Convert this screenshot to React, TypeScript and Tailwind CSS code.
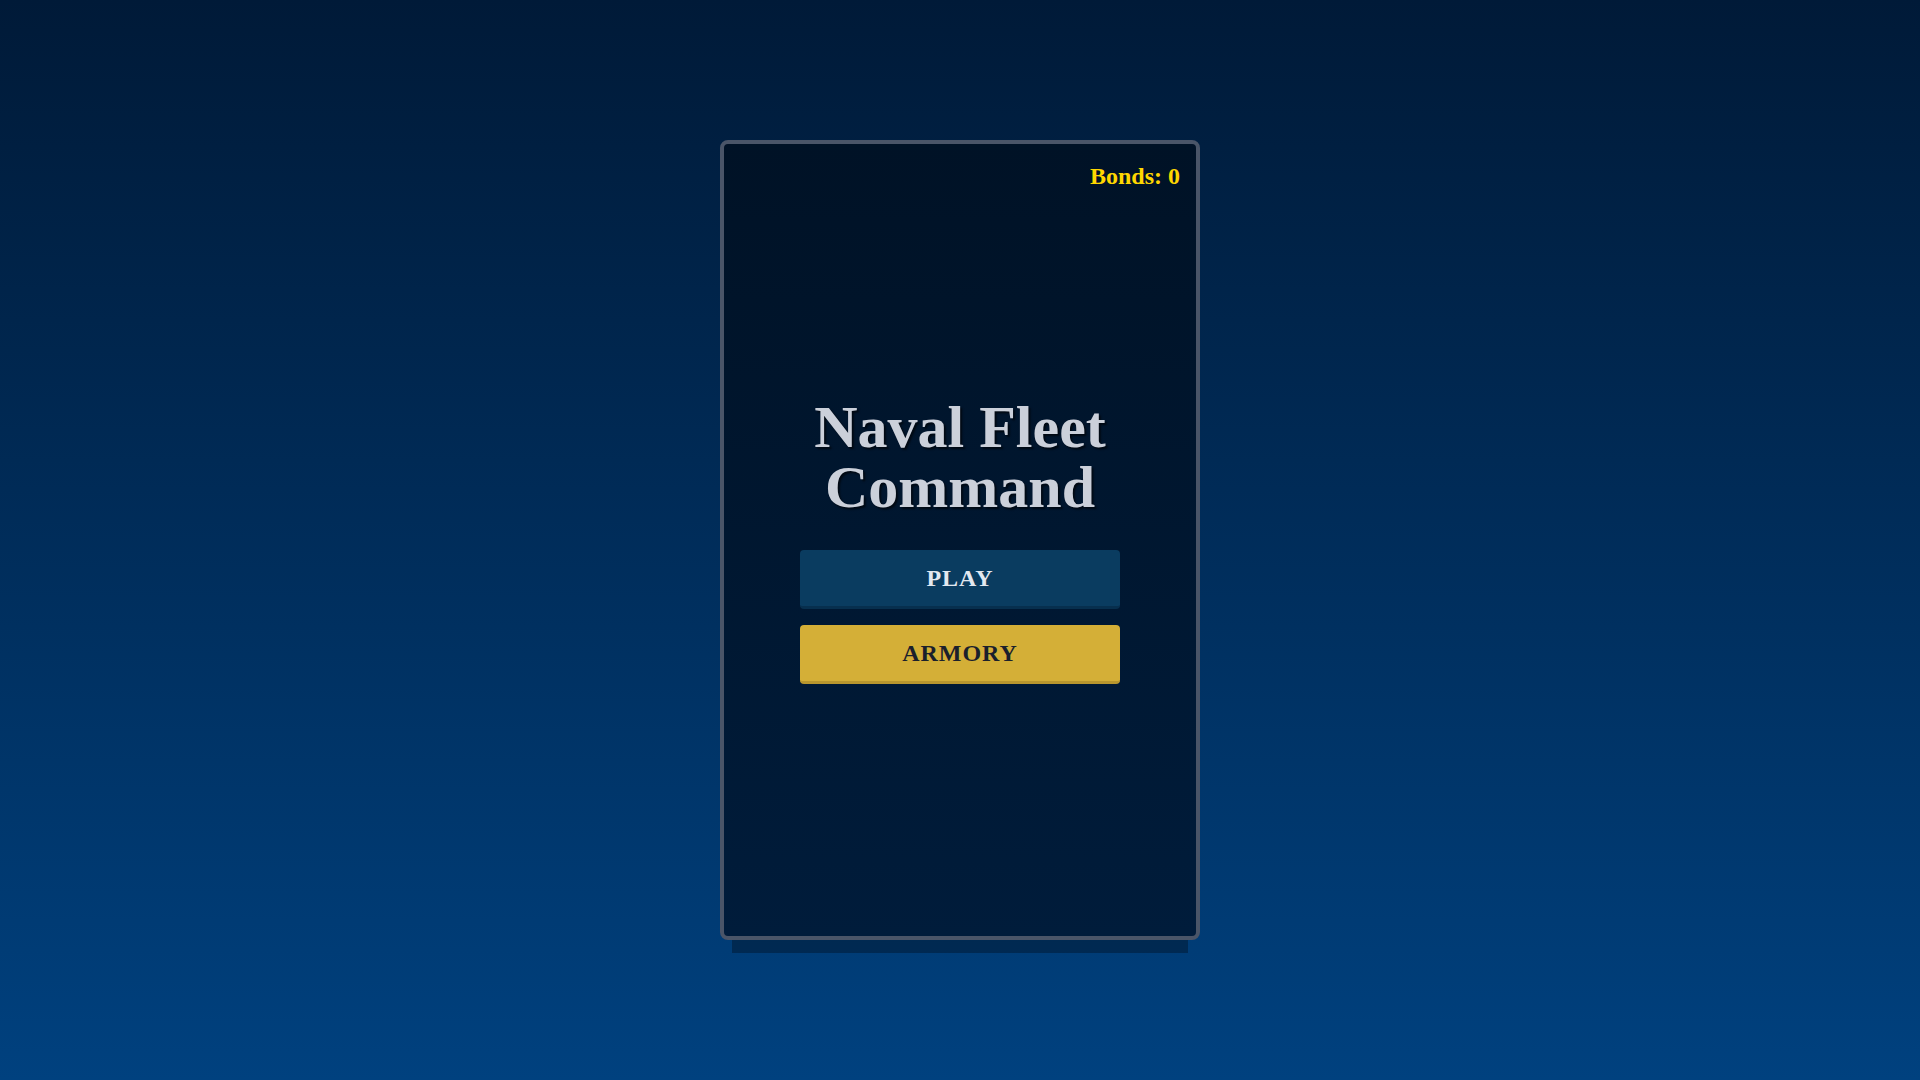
export default function App() {
  return (
    <main className="flex h-screen w-full items-center justify-center bg-gradient-to-b from-[#001a38] to-[#00417f] font-['Liberation_Serif',serif]">
      <div className="relative flex h-[800px] w-[480px] flex-col items-center justify-center rounded-lg border-4 border-[#4a5568] bg-gradient-to-b from-[#001226] to-[#001c3b] shadow-[0_25px_0_-12px_rgba(0,0,0,0.3)]">
        <div className="absolute right-4 top-4 text-2xl font-bold text-[#ffd700]">
          Bonds: 0
        </div>

        <h1 className="mb-[33px] text-center text-6xl font-bold leading-none text-[#cbd0da] [text-shadow:2px_2px_2px_rgba(0,0,0,0.6)]">
          Naval Fleet
          <br />
          Command
        </h1>

        <div className="flex flex-col gap-4">
          <button className="h-[59px] w-[320px] rounded border-b-[3px] border-[#072f4e] bg-[#0a3c60] text-2xl font-bold tracking-[0.04em] text-[#e2e8f0]">
            PLAY
          </button>
          <button className="h-[59px] w-[320px] rounded border-b-[3px] border-[#b8962e] bg-[#d4af37] text-2xl font-bold tracking-[0.04em] text-[#1a202c]">
            ARMORY
          </button>
        </div>
      </div>
    </main>
  );
}
